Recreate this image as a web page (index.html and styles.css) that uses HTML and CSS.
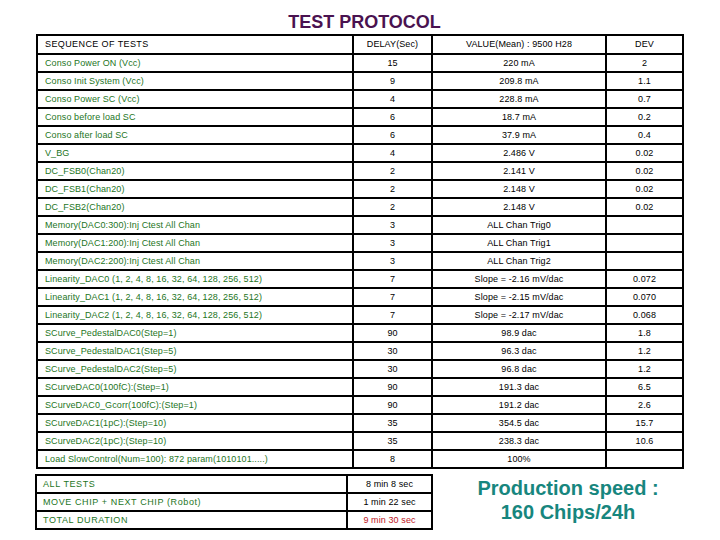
FILE: index.html
```html
<!DOCTYPE html>
<html>
<head>
<meta charset="utf-8">
<link rel="stylesheet" href="styles.css">
</head>
<body>
<h1 class="title">TEST PROTOCOL</h1>
<table class="main">
  <colgroup><col class="c1"><col class="c2"><col class="c3"><col class="c4"></colgroup>
  <thead>
    <tr class="head"><th class="lbl">SEQUENCE OF TESTS</th><th>DELAY(Sec)</th><th>VALUE(Mean) : 9500 H28</th><th>DEV</th></tr>
  </thead>
  <tbody>
    <tr><td class="lbl">Conso Power ON (Vcc)</td><td>15</td><td>220 mA</td><td>2</td></tr>
    <tr><td class="lbl">Conso Init System (Vcc)</td><td>9</td><td>209.8 mA</td><td>1.1</td></tr>
    <tr><td class="lbl">Conso Power SC (Vcc)</td><td>4</td><td>228.8 mA</td><td>0.7</td></tr>
    <tr><td class="lbl">Conso before load SC</td><td>6</td><td>18.7 mA</td><td>0.2</td></tr>
    <tr><td class="lbl">Conso after load SC</td><td>6</td><td>37.9 mA</td><td>0.4</td></tr>
    <tr><td class="lbl">V_BG</td><td>4</td><td>2.486 V</td><td>0.02</td></tr>
    <tr><td class="lbl">DC_FSB0(Chan20)</td><td>2</td><td>2.141 V</td><td>0.02</td></tr>
    <tr><td class="lbl">DC_FSB1(Chan20)</td><td>2</td><td>2.148 V</td><td>0.02</td></tr>
    <tr><td class="lbl">DC_FSB2(Chan20)</td><td>2</td><td>2.148 V</td><td>0.02</td></tr>
    <tr><td class="lbl">Memory(DAC0:300):Inj Ctest All Chan</td><td>3</td><td>ALL Chan Trig0</td><td></td></tr>
    <tr><td class="lbl">Memory(DAC1:200):Inj Ctest All Chan</td><td>3</td><td>ALL Chan Trig1</td><td></td></tr>
    <tr><td class="lbl">Memory(DAC2:200):Inj Ctest All Chan</td><td>3</td><td>ALL Chan Trig2</td><td></td></tr>
    <tr><td class="lbl">Linearity_DAC0 (1, 2, 4, 8, 16, 32, 64, 128, 256, 512)</td><td>7</td><td>Slope = -2.16 mV/dac</td><td>0.072</td></tr>
    <tr><td class="lbl">Linearity_DAC1 (1, 2, 4, 8, 16, 32, 64, 128, 256, 512)</td><td>7</td><td>Slope = -2.15 mV/dac</td><td>0.070</td></tr>
    <tr><td class="lbl">Linearity_DAC2 (1, 2, 4, 8, 16, 32, 64, 128, 256, 512)</td><td>7</td><td>Slope = -2.17 mV/dac</td><td>0.068</td></tr>
    <tr><td class="lbl">SCurve_PedestalDAC0(Step=1)</td><td>90</td><td>98.9 dac</td><td>1.8</td></tr>
    <tr><td class="lbl">SCurve_PedestalDAC1(Step=5)</td><td>30</td><td>96.3 dac</td><td>1.2</td></tr>
    <tr><td class="lbl">SCurve_PedestalDAC2(Step=5)</td><td>30</td><td>96.8 dac</td><td>1.2</td></tr>
    <tr><td class="lbl">SCurveDAC0(100fC):(Step=1)</td><td>90</td><td>191.3 dac</td><td>6.5</td></tr>
    <tr><td class="lbl">SCurveDAC0_Gcorr(100fC):(Step=1)</td><td>90</td><td>191.2 dac</td><td>2.6</td></tr>
    <tr><td class="lbl">SCurveDAC1(1pC):(Step=10)</td><td>35</td><td>354.5 dac</td><td>15.7</td></tr>
    <tr><td class="lbl">SCurveDAC2(1pC):(Step=10)</td><td>35</td><td>238.3 dac</td><td>10.6</td></tr>
    <tr><td class="lbl">Load SlowControl(Num=100): 872 param(1010101.....)</td><td>8</td><td>100%</td><td></td></tr>
  </tbody>
</table>
<div class="bottom">
  <table class="summary">
    <colgroup><col class="s1"><col class="s2"></colgroup>
    <tr><td class="lbl caps">ALL TESTS</td><td>8 min 8 sec</td></tr>
    <tr><td class="lbl caps">MOVE CHIP + NEXT CHIP (Robot)</td><td>1 min 22 sec</td></tr>
    <tr><td class="lbl caps">TOTAL DURATION</td><td class="red">9 min 30 sec</td></tr>
  </table>
  <div class="speed">Production speed :<br>160 Chips/24h</div>
</div>
</body>
</html>
```
FILE: styles.css
```css
html, body {
  margin: 0;
  padding: 0;
  background: #fff;
  font-family: "Liberation Sans", Arial, sans-serif;
}

.title {
  margin: 12px 0 0 0;
  padding-left: 9px;
  height: 20px;
  line-height: 20px;
  font-size: 18px;
  font-weight: bold;
  color: #4a1250;
  text-align: center;
}

table {
  border-collapse: separate;
  border-spacing: 2px;
  background: #000;
  table-layout: fixed;
  font-size: 9px;
  letter-spacing: 0.1px;
}

td, th {
  background: #fff;
  padding: 0;
  text-align: center;
  font-weight: normal;
  color: #000;
  white-space: nowrap;
  overflow: hidden;
  height: 16px;
  line-height: 15px;
}

.main {
  margin: 2px 0 0 36px;
  width: 648px;
}

.main .c1 { width: 314px; }
.main .c2 { width: 77px; }
.main .c3 { width: 172px; }
.main .c4 { width: 75px; }

.main .head th {
  height: 17px;
  line-height: 17px;
}

.lbl {
  text-align: left;
  padding-left: 7px;
  color: #1d751d;
}

.main th.lbl {
  color: #000;
  letter-spacing: 0.4px;
}

.bottom {
  display: flex;
  margin-top: 5px;
  padding-left: 35px;
}

.summary {
  width: 398px;
}

.summary .s1 { width: 309px; }
.summary .s2 { width: 83px; }

.summary .lbl {
  padding-left: 6px;
}

.caps {
  letter-spacing: 0.6px;
}

.red {
  color: #c0141e;
}

.speed {
  flex: 1;
  margin-top: 2px;
  padding-right: 17px;
  text-align: center;
  font-size: 20px;
  line-height: 24px;
  font-weight: bold;
  color: #17867e;
}
```
